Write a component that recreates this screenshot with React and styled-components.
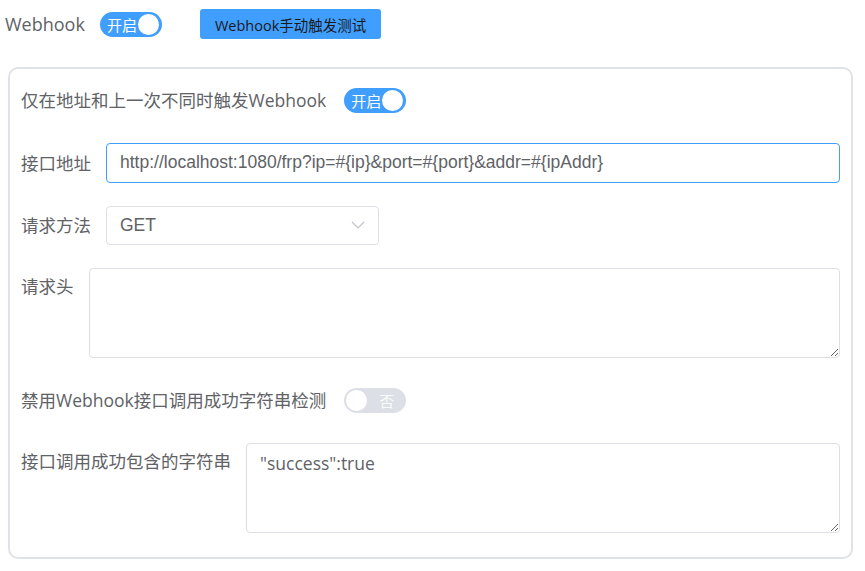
import React from 'react'
import styled, { createGlobalStyle } from 'styled-components'

const GlobalStyle = createGlobalStyle`
  body {
    margin: 0;
    background: #fff;
    font-family: "Open Sans", "Noto Sans CJK SC", sans-serif;
    color: #606266;
  }
`

const Page = styled.div`
  padding: 4px 12px 0 8px;
`

const TopRow = styled.div`
  display: flex;
  align-items: center;
  height: 40px;
  margin: 0 0 23px -3px;
`

const Title = styled.span`
  font-size: 18px;
  color: #606266;
  margin-right: 15px;
`

const Switch = styled.span`
  position: relative;
  display: inline-flex;
  align-items: center;
  width: 62px;
  height: 25px;
  border-radius: 13px;
  background: ${props => (props.on ? '#409eff' : '#dcdfe6')};
  flex-shrink: 0;
  &::after {
    content: '';
    position: absolute;
    top: 2px;
    left: ${props => (props.on ? '38px' : '2px')};
    width: 21px;
    height: 21px;
    border-radius: 50%;
    background: #fff;
  }
`

const SwitchText = styled.span`
  font-family: "Noto Sans CJK SC", sans-serif;
  font-size: 15px;
  line-height: 1;
  color: #fff;
  opacity: ${props => (props.on ? 1 : 0.85)};
  margin-left: ${props => (props.on ? '7px' : '35px')};
`

const TestButton = styled.button`
  margin-left: 38px;
  height: 30px;
  padding: 0 15px;
  border: none;
  border-radius: 3px;
  background: #409eff;
  color: #1a1a1a;
  font-family: "Open Sans", "Noto Sans CJK SC", sans-serif;
  font-size: 14.5px;
  cursor: pointer;
`

const Card = styled.div`
  border: 2px solid #dfe2e8;
  border-radius: 10px;
  padding: 11px 11px 24px 11px;
  display: flex;
  flex-direction: column;
  gap: 22.6px;
`

const Row = styled.div`
  display: flex;
  align-items: ${props => (props.top ? 'flex-start' : 'center')};
  min-height: 40px;
`

const Label = styled.label`
  font-size: 17.5px;
  line-height: 40px;
  color: #606266;
  margin-right: ${props => props.gap || 15}px;
  white-space: nowrap;
  margin-top: ${props => (props.top ? '-2px' : '0')};
`

const TextInput = styled.input`
  flex: 1;
  height: 40px;
  box-sizing: border-box;
  border: 1px solid ${props => (props.focused ? '#409eff' : '#dcdfe6')};
  border-radius: 4px;
  padding: 0 13px;
  font-family: "Liberation Sans", Arial, sans-serif;
  font-size: 17.5px;
  color: #606266;
  outline: none;
`

const SelectBox = styled.div`
  width: 273px;
  height: 39px;
  box-sizing: border-box;
  border: 1px solid #dcdfe6;
  border-radius: 4px;
  padding: 0 13px;
  display: flex;
  align-items: center;
  justify-content: space-between;
  font-family: "Liberation Sans", Arial, sans-serif;
  font-size: 17.5px;
  color: #606266;
`

const TextArea = styled.textarea`
  flex: 1;
  height: 90px;
  box-sizing: border-box;
  border: 1px solid #dcdfe6;
  border-radius: 4px;
  padding: 6px 13px;
  font-family: "Open Sans", "Noto Sans CJK SC", sans-serif;
  font-size: 17.5px;
  line-height: 1.5;
  color: #606266;
  resize: vertical;
  outline: none;
`

const Chevron = () => (
  <svg width="14" height="8" viewBox="0 0 14 8" fill="none">
    <path d="M1 1l6 6 6-6" stroke="#c0c4cc" strokeWidth="1.2" />
  </svg>
)

const Toggle = ({ on, text }) => (
  <Switch on={on ? 1 : 0}>
    <SwitchText on={on ? 1 : 0}>{text}</SwitchText>
  </Switch>
)

const App = () => (
  <Page>
    <GlobalStyle />
    <TopRow>
      <Title>Webhook</Title>
      <Toggle on text="开启" />
      <TestButton>Webhook手动触发测试</TestButton>
    </TopRow>
    <Card>
      <Row>
        <Label gap={18}>仅在地址和上一次不同时触发Webhook</Label>
        <Toggle on text="开启" />
      </Row>
      <Row>
        <Label>接口地址</Label>
        <TextInput
          focused
          readOnly
          value="http://localhost:1080/frp?ip=#{ip}&port=#{port}&addr=#{ipAddr}"
        />
      </Row>
      <Row>
        <Label>请求方法</Label>
        <SelectBox>
          <span>GET</span>
          <Chevron />
        </SelectBox>
      </Row>
      <Row top>
        <Label top>请求头</Label>
        <TextArea readOnly value="" />
      </Row>
      <Row>
        <Label gap={18}>禁用Webhook接口调用成功字符串检测</Label>
        <Toggle text="否" />
      </Row>
      <Row top>
        <Label top>接口调用成功包含的字符串</Label>
        <TextArea readOnly value={'"success":true'} />
      </Row>
    </Card>
  </Page>
)

export default App
